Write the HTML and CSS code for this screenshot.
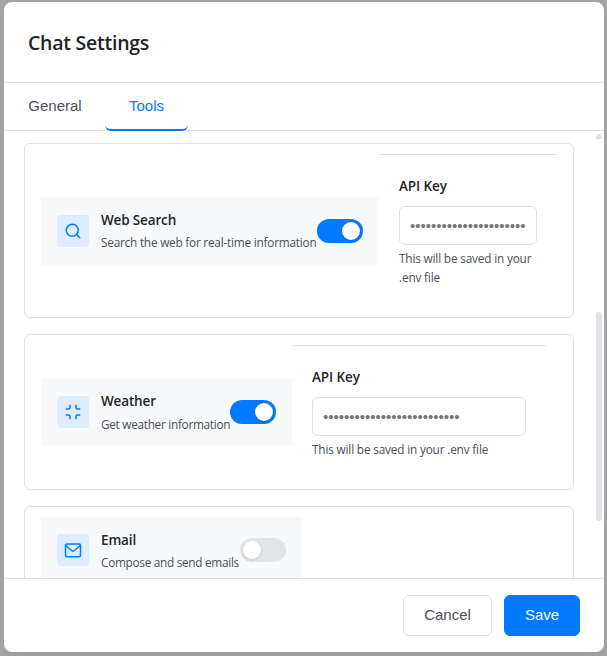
FILE: index.html
```html
<!DOCTYPE html>
<html lang="en">
<head>
<meta charset="utf-8">
<title>Chat Settings</title>
<link rel="stylesheet" href="styles.css">
</head>
<body>
<div class="modal">
  <header class="modal-header"><h2>Chat Settings</h2></header>
  <nav class="tabs">
    <button class="tab general">General</button>
    <button class="tab active">Tools</button>
  </nav>
  <main class="content">
    <section class="card search">
      <div class="tool">
        <div class="icon"><svg viewBox="0 0 24 24"><circle cx="11" cy="11" r="8"/><path d="m21 21-4.35-4.35"/></svg></div>
        <div class="info"><h3>Web Search</h3><p>Search the web for real-time information</p></div>
        <span class="toggle on"></span>
      </div>
      <div class="config">
        <label>API Key</label>
        <input type="text" placeholder="••••••••••••••••••••••••••">
        <p class="hint">This will be saved in your<br>.env file</p>
      </div>
    </section>
    <section class="card weather">
      <div class="tool">
        <div class="icon"><svg viewBox="0 0 24 24"><path d="M8 3v3a2 2 0 0 1-2 2H3M21 8h-3a2 2 0 0 1-2-2V3M3 16h3a2 2 0 0 1 2 2v3M16 21v-3a2 2 0 0 1 2-2h3"/></svg></div>
        <div class="info"><h3>Weather</h3><p>Get weather information</p></div>
        <span class="toggle on"></span>
      </div>
      <div class="config">
        <label>API Key</label>
        <input type="text" placeholder="••••••••••••••••••••••••••">
        <p class="hint">This will be saved in your .env file</p>
      </div>
    </section>
    <section class="card email">
      <div class="tool">
        <div class="icon"><svg viewBox="0 0 24 24"><rect x="2" y="4" width="20" height="17" rx="2"/><path d="m22 6-10 8L2 6"/></svg></div>
        <div class="info"><h3>Email</h3><p>Compose and send emails</p></div>
        <span class="toggle"></span>
      </div>
    </section>
    <div class="scrollbar"><i class="arrow"></i><i class="thumb"></i></div>
  </main>
  <footer class="modal-footer">
    <button class="btn cancel">Cancel</button>
    <button class="btn save">Save</button>
  </footer>
</div>
</body>
</html>
```

FILE: styles.css
```css
* { box-sizing: border-box; }
body {
  margin: 0;
  padding: 2px 3px 4px 4px;
  height: 656px;
  overflow: hidden;
  background: #a5a5a5;
  font-family: "Open Sans", "Noto Sans", sans-serif;
  color: #212529;
}
h2, h3, p { margin: 0; }
button, input { font-family: "Liberation Sans", Arial, sans-serif; font-size: 15px; }
.modal {
  display: flex;
  flex-direction: column;
  width: 600px;
  height: 650px;
  border-radius: 8px;
  overflow: hidden;
  background: #fff;
  box-shadow: 0 4px 12px rgba(0, 0, 0, .06);
}
.modal-header {
  height: 81px;
  flex: none;
  padding: 27px 24px 0;
  border-bottom: 1px solid #dee2e6;
}
h2 { font-size: 19.5px; line-height: 28px; font-weight: 600; letter-spacing: -.25px; }
.tabs {
  display: flex;
  flex: none;
  height: 48px;
  border-bottom: 1px solid #dee2e6;
}
.tab {
  height: 48px;
  padding: 0 24px 2px;
  border: 0;
  border-bottom: 2px solid transparent;
  border-radius: 6px;
  background: none;
  color: #495057;
}
.tab.general { width: 101px; padding-right: 23px; }
.tab.active { width: 83px; color: #007bff; border-bottom-color: #007bff; }
.content {
  position: relative;
  display: flex;
  flex-direction: column;
  gap: 16px;
  height: 447px;
  flex: none;
  padding: 12px 30px 0 20px;
  overflow: hidden;
}
.card {
  display: flex;
  align-items: center;
  flex: none;
  padding: 10px 16px;
  border: 1px solid #dee2e6;
  border-radius: 6px;
}
.search { height: 175px; }
.weather { height: 156px; }
.email { height: 156px; align-items: flex-start; }
.tool {
  display: flex;
  align-items: center;
  flex: none;
  height: 68px;
  padding: 0 16px;
  background: #f8f9fa;
}
.search .tool { width: 338px; }
.weather .tool { width: 251px; }
.email .tool { width: 261px; padding-bottom: 2px; }
.icon {
  display: flex;
  align-items: center;
  justify-content: center;
  flex: none;
  width: 32px;
  height: 32px;
  margin-right: 12px;
  border-radius: 4px;
  background: #dfecfb;
}
.icon svg {
  width: 18px;
  height: 18px;
  fill: none;
  stroke: #007bff;
  stroke-width: 2;
  stroke-linecap: round;
  stroke-linejoin: round;
}
.info { flex: 1; min-width: 0; white-space: nowrap; }
h3 { height: 22px; font-size: 13.5px; line-height: 22px; font-weight: 600; letter-spacing: -.15px; }
.info p { height: 22px; font-size: 11.8px; line-height: 22px; color: #495057; letter-spacing: -.22px; }
.weather .info p, .email .info p { letter-spacing: -.29px; }
.weather .info p { height: 23px; line-height: 24px; }
.email .info { padding-top: 1px; }
.toggle {
  flex: none;
  width: 46px;
  height: 24px;
  padding: 3px;
  border-radius: 12px;
  background: #e2e5e8;
}
.toggle::after {
  content: "";
  display: block;
  width: 18px;
  height: 18px;
  border-radius: 50%;
  background: #fff;
  box-shadow: 0 1px 3px rgba(0, 0, 0, .15);
}
.toggle.on { background: #007bff; }
.toggle.on::after { margin-left: 22px; }
.config {
  align-self: flex-start;
  padding: 20px 20px 0;
  border-top: 1px solid #dee2e6;
}
.search .config { width: 178px; }
.weather .config { width: 254px; }
.config label {
  display: block;
  height: 31px;
  font-size: 13.5px;
  line-height: 22px;
  font-weight: 600;
  letter-spacing: -.1px;
}
.config input {
  display: block;
  width: 100%;
  height: 39px;
  padding: 0 10px;
  border: 1px solid #dee2e6;
  border-radius: 6px;
  background: #fff;
}
.config input::placeholder { color: #757575; opacity: 1; }
.hint { margin-top: 4px; font-size: 11.8px; line-height: 19px; color: #495057; letter-spacing: -.17px; white-space: nowrap; }
.scrollbar { position: absolute; top: 0; right: 1px; width: 8px; height: 447px; }
.arrow {
  position: absolute;
  top: 3px;
  left: 1px;
  width: 6px;
  height: 5px;
  background: #dee2e6;
  clip-path: polygon(35% 0, 65% 0, 100% 60%, 100% 100%, 0 100%, 0 60%);
}
.thumb {
  position: absolute;
  top: 181px;
  left: 1px;
  width: 6px;
  height: 209px;
  border-radius: 3px;
  background: #dee2e6;
}
.modal-footer {
  display: flex;
  justify-content: flex-end;
  gap: 12px;
  height: 74px;
  padding: 16px 24px 0;
  border-top: 1px solid #dee2e6;
}
.btn { height: 41px; padding: 0 0 2px; border: 1px solid #dee2e6; border-radius: 6px; background: #fff; color: #495057; }
.cancel { width: 89px; }
.save { width: 76px; border-color: #007bff; background: #007bff; color: #fff; }
```
